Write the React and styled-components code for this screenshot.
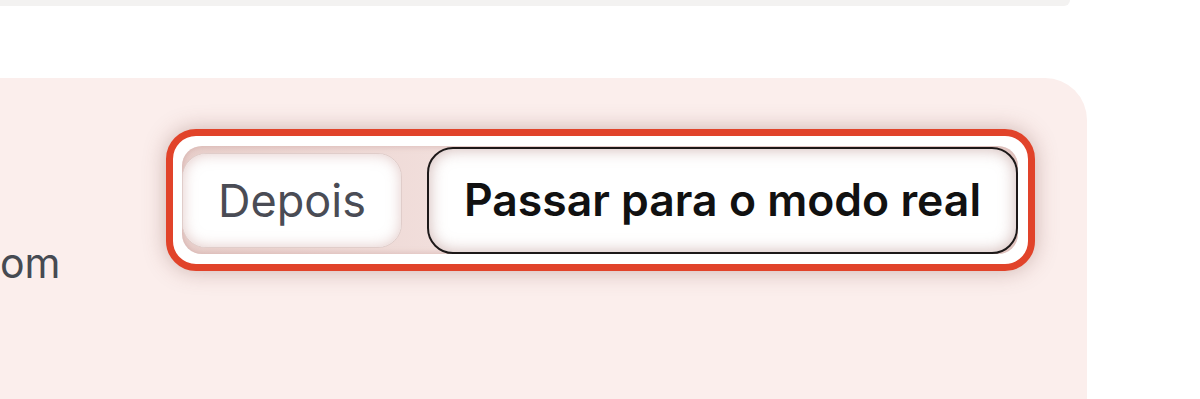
import React from 'react';
import styled, { createGlobalStyle } from 'styled-components';

const GlobalStyle = createGlobalStyle`
  html, body {
    margin: 0;
    padding: 0;
    background: #ffffff;
  }
  body {
    font-family: Inter, "Noto Sans", "Liberation Sans", sans-serif;
  }
`;

const Page = styled.div`
  width: 1200px;
  height: 399px;
  overflow: hidden;
  display: flex;
  flex-direction: column;
  background: #ffffff;
`;

const TopPanel = styled.div`
  width: 1070px;
  height: 6px;
  background: #f3f2f1;
  border-bottom-right-radius: 16px;
  flex-shrink: 0;
`;

const Card = styled.section`
  margin-top: 72px;
  width: 1087px;
  flex: 1;
  background: #fbeeec;
  border-top-right-radius: 42px;
  display: flex;
  align-items: flex-start;
  padding-top: 51px;
  box-sizing: border-box;
`;

const Message = styled.p`
  margin: 110px 0 0 0;
  width: 60px;
  font-size: 41px;
  line-height: 48px;
  color: #464a52;
  white-space: nowrap;
`;

const Ring = styled.div`
  margin-left: 106px;
  border: 7px solid #e1432a;
  border-radius: 30px;
  padding: 10px 10px 10px 9px;
  background: #ffffff;
  box-shadow: 0 0 22px rgba(120, 70, 60, 0.35);
  display: flex;
`;

const Group = styled.div`
  display: flex;
  align-items: center;
  gap: 25px;
  height: 108px;
  border-radius: 20px;
  background: linear-gradient(90deg, #e8cfcb 0%, #f1dedb 30%, #eed9d6 70%, #e8d0cc 100%);
  box-shadow: inset 0 0 6px rgba(190, 140, 135, 0.5);
`;

const Button = styled.button`
  font-family: Inter, "Noto Sans", "Liberation Sans", sans-serif;
  box-sizing: border-box;
  cursor: pointer;
  background: #ffffff;
  display: flex;
  align-items: center;
  justify-content: center;
  padding: 0;
  font-size: ${(p) => (p.$primary ? '44.5px' : '45px')};
  width: ${(p) => (p.$primary ? '591px' : '220px')};
  height: ${(p) => (p.$primary ? '107px' : '95px')};
  border-radius: ${(p) => (p.$primary ? '26px' : '24px')};
  border: ${(p) => (p.$primary ? '2px solid #1d1818' : '1px solid #e0cdca')};
  color: ${(p) => (p.$primary ? '#111111' : '#4a4c55')};
  font-weight: ${(p) => (p.$primary ? 600 : 400)};
  box-shadow: ${(p) =>
    p.$primary
      ? 'inset 0 0 16px rgba(170, 120, 115, 0.55)'
      : 'inset 0 0 14px rgba(200, 150, 145, 0.5)'};
`;

export default function App() {
  return (
    <>
      <GlobalStyle />
      <Page>
        <TopPanel />
        <Card>
          <Message>om</Message>
          <Ring>
            <Group>
              <Button>Depois</Button>
              <Button $primary>Passar para o modo real</Button>
            </Group>
          </Ring>
        </Card>
      </Page>
    </>
  );
}
